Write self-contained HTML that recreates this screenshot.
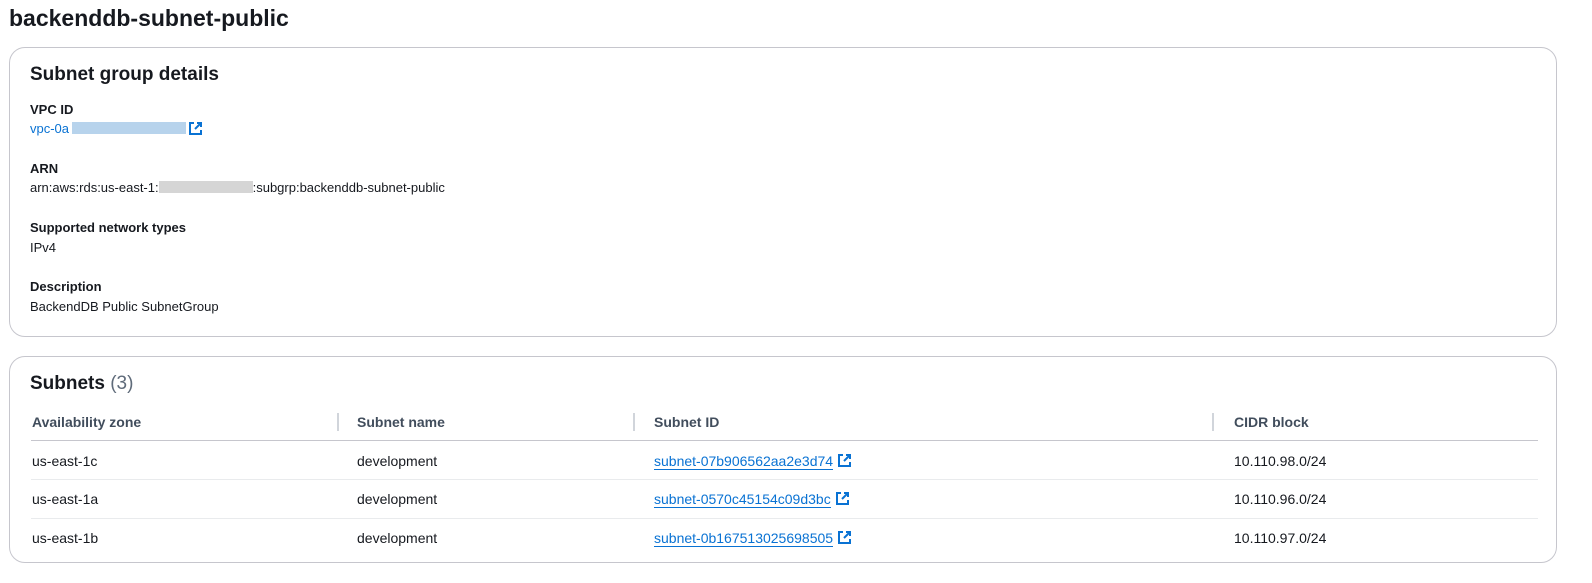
<!DOCTYPE html>
<html><head><style>
body{margin:0;width:1592px;height:583px;background:#fff;font-family:"Liberation Sans",sans-serif;color:#16191f;position:relative;overflow:hidden}
.a{position:absolute;white-space:nowrap}
.card{position:absolute;left:9px;width:1548px;border:1px solid #c6c6cd;border-radius:16px;box-sizing:border-box}
.lbl{font-size:13px;font-weight:bold}
.val{font-size:13px}
.lnk{color:#0972d3}
.th{font-size:14px;font-weight:bold;color:#414d5c}
.td{font-size:14px}
.ul{border-bottom:1px solid #0972d3}
.hr{position:absolute;left:31px;width:1507px;height:1px;background:#e9ebed}
.vd{position:absolute;width:2px;height:18px;top:413px;background:#d1d5db}
.ic{display:inline-block;vertical-align:-2px;margin-left:4px}
</style></head><body>
<div class="a" style="left:9px;top:5px;font-size:23px;font-weight:bold">backenddb-subnet-public</div>
<div class="card" style="top:47px;height:290px"></div>
<div class="a" style="left:30px;top:64px;font-size:19px;font-weight:bold">Subnet group details</div>
<div class="a lbl" style="left:30px;top:102px">VPC ID</div>
<div class="a val lnk" style="left:30px;top:121px">vpc-0a</div>
<div class="a" style="left:72px;top:122px;width:114px;height:12px;background:#b7d3ec"></div>
<svg class="a" style="left:188px;top:121px" width="15" height="15" viewBox="0 0 15 15"><path d="M6 2H2v11h11V9M9 2h4v4M13 2L7 8" fill="none" stroke="#0972d3" stroke-width="2"/></svg>
<div class="a lbl" style="left:30px;top:161px">ARN</div>
<div class="a val" style="left:30px;top:180px">arn:aws:rds:us-east-1:<span style="display:inline-block;width:94px;height:12px;background:#d5d5d5;vertical-align:-1px"></span>:subgrp:backenddb-subnet-public</div>
<div class="a lbl" style="left:30px;top:220px">Supported network types</div>
<div class="a val" style="left:30px;top:240px">IPv4</div>
<div class="a lbl" style="left:30px;top:279px">Description</div>
<div class="a val" style="left:30px;top:299px">BackendDB Public SubnetGroup</div>

<div class="card" style="top:356px;height:207px"></div>
<div class="a" style="left:30px;top:373px;font-size:19px;font-weight:bold">Subnets <span style="font-weight:normal;color:#5f6b7a">(3)</span></div>
<div class="a th" style="left:32px;top:414px">Availability zone</div>
<div class="vd" style="left:337px"></div>
<div class="a th" style="left:357px;top:414px">Subnet name</div>
<div class="vd" style="left:633px"></div>
<div class="a th" style="left:654px;top:414px">Subnet ID</div>
<div class="vd" style="left:1212px"></div>
<div class="a th" style="left:1234px;top:414px">CIDR block</div>
<div class="hr" style="top:440px;background:#c6c6cd"></div>
<div class="hr" style="top:479px"></div>
<div class="hr" style="top:518px"></div>

<div class="a td" style="left:32px;top:453px">us-east-1c</div>
<div class="a td" style="left:357px;top:453px">development</div>
<div class="a td lnk" style="left:654px;top:453px"><span class="ul">subnet-07b906562aa2e3d74</span><svg class="ic" width="15" height="15" viewBox="0 0 15 15"><path d="M6 2H2v11h11V9M9 2h4v4M13 2L7 8" fill="none" stroke="#0972d3" stroke-width="2"/></svg></div>
<div class="a td" style="left:1234px;top:453px">10.110.98.0/24</div>

<div class="a td" style="left:32px;top:491px">us-east-1a</div>
<div class="a td" style="left:357px;top:491px">development</div>
<div class="a td lnk" style="left:654px;top:491px"><span class="ul">subnet-0570c45154c09d3bc</span><svg class="ic" width="15" height="15" viewBox="0 0 15 15"><path d="M6 2H2v11h11V9M9 2h4v4M13 2L7 8" fill="none" stroke="#0972d3" stroke-width="2"/></svg></div>
<div class="a td" style="left:1234px;top:491px">10.110.96.0/24</div>

<div class="a td" style="left:32px;top:530px">us-east-1b</div>
<div class="a td" style="left:357px;top:530px">development</div>
<div class="a td lnk" style="left:654px;top:530px"><span class="ul">subnet-0b167513025698505</span><svg class="ic" width="15" height="15" viewBox="0 0 15 15"><path d="M6 2H2v11h11V9M9 2h4v4M13 2L7 8" fill="none" stroke="#0972d3" stroke-width="2"/></svg></div>
<div class="a td" style="left:1234px;top:530px">10.110.97.0/24</div>
</body></html>
